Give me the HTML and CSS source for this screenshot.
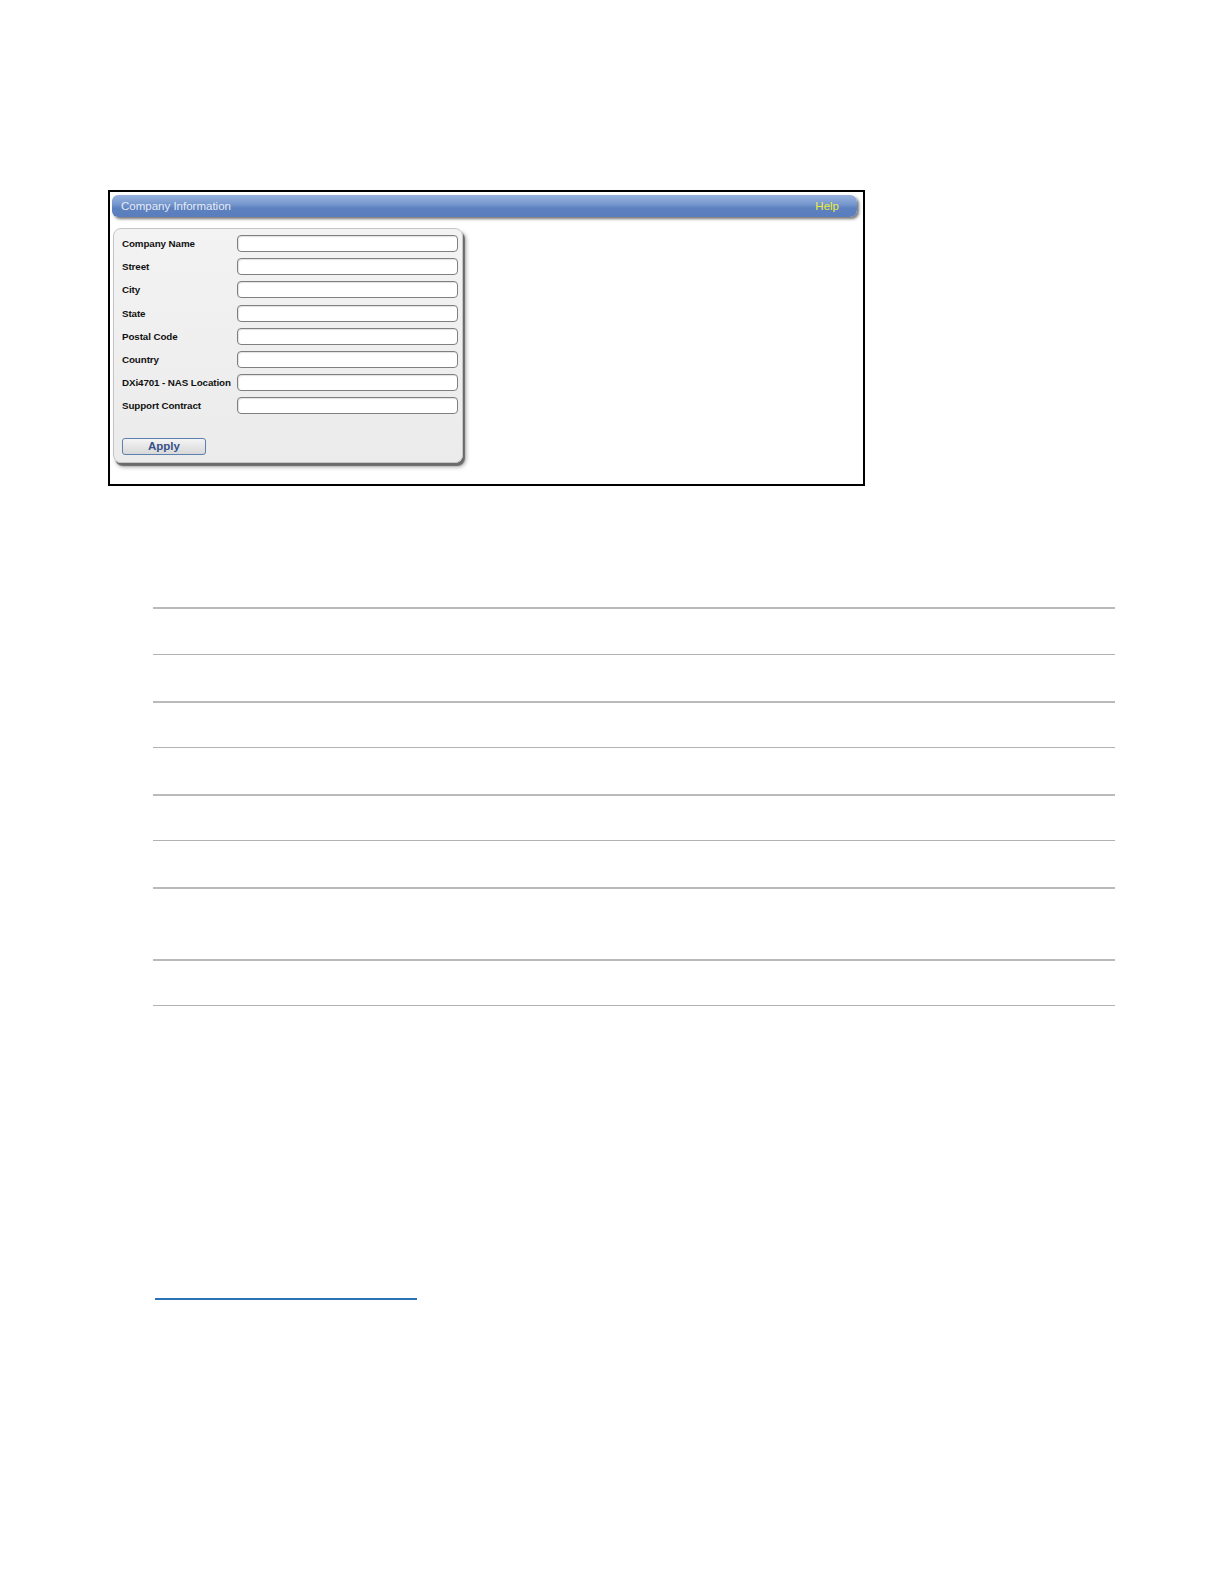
FILE: index.html
```html
<!DOCTYPE html>
<html>
<head>
<meta charset="utf-8">
<link rel="stylesheet" href="styles.css">
</head>
<body>
<div class="page">
  <div class="figure">
    <div class="titlebar">
      <span class="title">Company Information</span>
      <span class="help">Help</span>
    </div>
    <div class="panel">
      <div class="form-row"><span class="label">Company Name</span><span class="input"></span></div>
      <div class="form-row"><span class="label">Street</span><span class="input"></span></div>
      <div class="form-row"><span class="label">City</span><span class="input"></span></div>
      <div class="form-row"><span class="label">State</span><span class="input"></span></div>
      <div class="form-row"><span class="label">Postal Code</span><span class="input"></span></div>
      <div class="form-row"><span class="label">Country</span><span class="input"></span></div>
      <div class="form-row"><span class="label">DXi4701 - NAS Location</span><span class="input"></span></div>
      <div class="form-row"><span class="label">Support Contract</span><span class="input"></span></div>
      <div class="button">Apply</div>
    </div>
  </div>

  <div class="rules">
    <div class="rule thick h47"></div>
    <div class="rule thin h47"></div>
    <div class="rule thick h46"></div>
    <div class="rule thin h47"></div>
    <div class="rule thick h46"></div>
    <div class="rule thin h47"></div>
    <div class="rule thick h72"></div>
    <div class="rule thick h46"></div>
    <div class="rule thin last"></div>
  </div>

  <div class="link-line"></div>
</div>
</body>
</html>
```

FILE: styles.css
```css
html, body {
  margin: 0;
  padding: 0;
  background: #ffffff;
}

.page {
  width: 1224px;
  padding-top: 190px;
  box-sizing: border-box;
  font-family: "Liberation Sans", Arial, sans-serif;
}

.figure {
  margin-left: 108px;
  width: 757px;
  height: 296px;
  box-sizing: border-box;
  border: 2px solid #000;
  background: #fff;
  padding: 3px 0 0 2px;
}

.titlebar {
  width: 745px;
  height: 22px;
  border-radius: 6px 7px 7px 6px;
  background: linear-gradient(#98b2dc 0%, #7899cf 40%, #5d81bf 60%, #5a7ebd 100%);
  box-shadow: 2px 2px 3px rgba(0, 0, 0, 0.55);
  display: flex;
  align-items: center;
  justify-content: space-between;
  padding: 0 18px 0 9px;
  box-sizing: border-box;
  font-size: 11.5px;
}

.title {
  color: #e6ecf6;
}

.help {
  color: #eeee3c;
}

.panel {
  margin-top: 11px;
  margin-left: 1px;
  width: 350px;
  height: 235px;
  box-sizing: border-box;
  border: 1px solid #c6c6c6;
  border-radius: 8px;
  background: linear-gradient(#f3f3f3, #ebebeb);
  box-shadow: 2px 3px 1px #6a6a6a, 3px 4px 4px rgba(0, 0, 0, 0.35);
  padding: 3px 0 0 8px;
}

.form-row {
  display: flex;
  align-items: center;
  height: 23.2px;
}

.label {
  width: 115px;
  font-size: 9.8px;
  font-weight: bold;
  letter-spacing: -0.1px;
  color: #111;
}

.input {
  width: 221px;
  height: 17px;
  box-sizing: border-box;
  border: 1px solid #7f7f7f;
  border-radius: 4px;
  background: #fff;
  box-shadow: inset 1px 1px 1px rgba(0, 0, 0, 0.12);
}

.button {
  margin-top: 20px;
  width: 84px;
  height: 17px;
  box-sizing: border-box;
  border: 1px solid #5c7fb0;
  border-radius: 3px;
  background: linear-gradient(#f4f4f4, #d8d8d8);
  color: #37508a;
  font-size: 11.5px;
  font-weight: bold;
  text-align: center;
  line-height: 15px;
}

.rules {
  margin-top: 121px;
  margin-left: 153px;
  width: 962px;
}

.rule {
  box-sizing: border-box;
  border-top: 1px solid #b2b2b2;
}

.rule.thick {
  border-top: 2px solid #bababa;
}

.rule.h46 { height: 46px; }
.rule.h47 { height: 47px; }
.rule.h72 { height: 72px; }

.rule.last {
  height: 1px;
}

.link-line {
  margin-top: 292px;
  margin-left: 155px;
  width: 262px;
  height: 0;
  border-top: 2px solid #2a72b4;
}
```
